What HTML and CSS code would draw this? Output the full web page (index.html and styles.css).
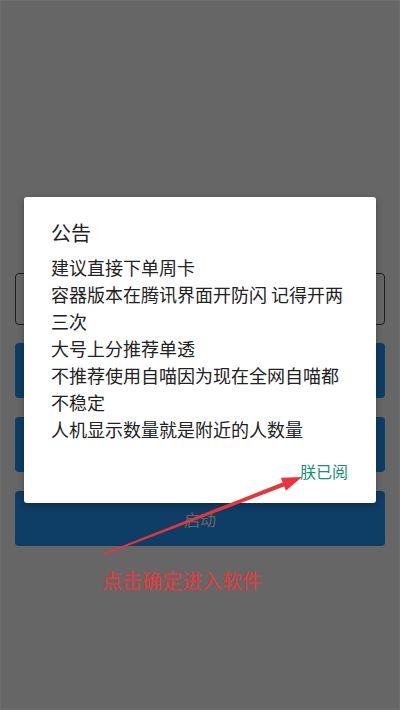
FILE: index.html
```html
<!DOCTYPE html>
<html lang="zh-CN">
<head>
<meta charset="utf-8">
<title>公告</title>
<link rel="stylesheet" href="styles.css">
</head>
<body>
  <main class="page">
    <div class="input-box"></div>
    <div class="btn-list">
      <button class="btn"></button>
      <button class="btn"></button>
      <button class="btn">启动</button>
    </div>
  </main>

  <div class="overlay">
    <div class="dialog">
      <div class="dialog-title">公告</div>
      <div class="dialog-body">
        <p>建议直接下单周卡</p>
        <p>容器版本在腾讯界面开防闪 记得开两三次</p>
        <p>大号上分推荐单透</p>
        <p>不推荐使用自喵因为现在全网自喵都不稳定</p>
        <p>人机显示数量就是附近的人数量</p>
      </div>
      <div class="dialog-actions">
        <span class="dialog-ok">朕已阅</span>
      </div>
    </div>
    <div class="hint">点击确定进入软件</div>
  </div>

  <svg class="arrow" width="400" height="710" viewBox="0 0 400 710" aria-hidden="true">
    <polygon fill="#e8353b" points="104.3,554.7 103.7,553.3 286.2,480.9 287.8,485.1"/>
    <polygon fill="#e8353b" points="302,477 280.9,477.7 285.9,490.7"/>
  </svg>
</body>
</html>
```

FILE: styles.css
```css
html, body {
  margin: 0;
  padding: 0;
}

body {
  width: 400px;
  height: 710px;
  overflow: hidden;
  background: #ffffff;
  font-family: "Noto Sans CJK SC", "Noto Sans", sans-serif;
  position: relative;
}

.page {
  padding: 273px 15px 0;
  display: flex;
  flex-direction: column;
}

.input-box {
  height: 50px;
  border: 1px solid #4a4a4a;
  border-radius: 4px;
}

.btn-list {
  margin-top: 18px;
  display: flex;
  flex-direction: column;
  gap: 19px;
}

.btn {
  height: 55px;
  border: none;
  border-radius: 4px;
  background: #2598fc;
  color: #ffffff;
  font-family: inherit;
  font-size: 16px;
  padding: 0;
}

.overlay {
  position: absolute;
  inset: 0;
  background: rgba(0, 0, 0, 0.6);
  box-shadow: inset 0 0 0 1px rgba(255, 255, 255, 0.06);
  padding: 197px 24px 0;
  display: flex;
  flex-direction: column;
  align-items: flex-start;
}

.dialog {
  width: 352px;
  box-sizing: border-box;
  background: #ffffff;
  border-radius: 3px;
  box-shadow: 0 2px 6px rgba(0, 0, 0, 0.3);
  padding: 24px 25px 22px 27px;
}

.dialog-title {
  font-size: 20px;
  line-height: 24px;
  color: #212121;
}

.dialog-body {
  margin-top: 9px;
  font-size: 18px;
  line-height: 27px;
  color: #222222;
}

.dialog-body p {
  margin: 0;
}

.dialog-actions {
  margin-top: 18px;
  display: flex;
  justify-content: flex-end;
  padding-right: 3px;
}

.dialog-ok {
  font-size: 16px;
  line-height: 20px;
  color: #15907f;
}

.hint {
  margin-top: 66px;
  margin-left: 78px;
  font-size: 20px;
  line-height: 24px;
  color: #e23a3e;
}

.arrow {
  position: absolute;
  left: 0;
  top: 0;
}
```
